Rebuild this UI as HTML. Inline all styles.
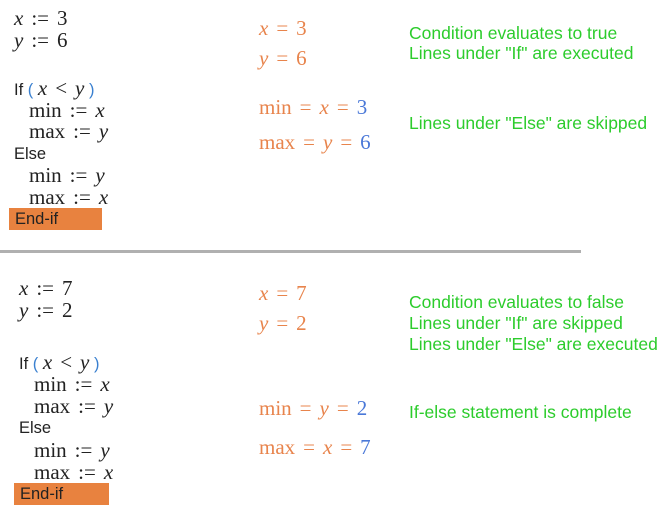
<!DOCTYPE html>
<html><head><meta charset="utf-8"><style>
body{margin:0;width:667px;height:515px;background:#fff;position:relative;overflow:hidden}
.t{position:absolute;line-height:20px;white-space:nowrap}
.m{font-family:"Liberation Serif",serif;font-size:21px;color:#222}
.s{font-family:"Liberation Sans",sans-serif;font-size:16.5px;color:#222}
.g{font-family:"Liberation Sans",sans-serif;font-size:17.5px;color:#2ccc2c}
.o{font-family:"Liberation Serif",serif;font-size:21px;color:#e8844c}
.b{color:#4a78d8}
i{font-style:italic}
.p{color:#3a80d0}
.q{margin:0 8px}
.box{position:absolute;background:#e8823f}
</style></head><body>
<div class="t m" style="left:14px;top:8px"><i>x</i><span class="q">:=</span>3</div>
<div class="t m" style="left:14px;top:30px"><i>y</i><span class="q">:=</span>6</div>
<div class="t s" style="left:14px;top:78px">If <span class="p">(</span> <span class="m"><i>x</i><span class="q">&lt;</span><i>y</i></span> <span class="p">)</span></div>
<div class="t m" style="left:29px;top:100px">min<span class="q">:=</span><i>x</i></div>
<div class="t m" style="left:29px;top:121px">max<span class="q">:=</span><i>y</i></div>
<div class="t s" style="left:14px;top:144px">Else</div>
<div class="t m" style="left:29px;top:165px">min<span class="q">:=</span><i>y</i></div>
<div class="t m" style="left:29px;top:187px">max<span class="q">:=</span><i>x</i></div>
<div class="box" style="left:9px;top:208px;width:93px;height:22px"></div>
<div class="t s" style="left:15px;top:209px">End-if</div>

<div class="t o" style="left:259px;top:18px"><i>x</i><span class="q">=</span>3</div>
<div class="t o" style="left:259px;top:48px"><i>y</i><span class="q">=</span>6</div>
<div class="t o" style="left:259px;top:97px">min<span class="q">=</span><i>x</i><span class="q">=</span><span class="b">3</span></div>
<div class="t o" style="left:259px;top:132px">max<span class="q">=</span><i>y</i><span class="q">=</span><span class="b">6</span></div>

<div class="t g" style="left:409px;top:23px">Condition evaluates to true</div>
<div class="t g" style="left:409px;top:43px">Lines under "If" are executed</div>
<div class="t g" style="left:409px;top:113px">Lines under "Else" are skipped</div>

<div style="position:absolute;left:0;top:250px;width:581px;height:3px;background:#b0b0b0"></div>

<div class="t m" style="left:19px;top:278px"><i>x</i><span class="q">:=</span>7</div>
<div class="t m" style="left:19px;top:300px"><i>y</i><span class="q">:=</span>2</div>
<div class="t s" style="left:19px;top:352px">If <span class="p">(</span> <span class="m"><i>x</i><span class="q">&lt;</span><i>y</i></span> <span class="p">)</span></div>
<div class="t m" style="left:34px;top:374px">min<span class="q">:=</span><i>x</i></div>
<div class="t m" style="left:34px;top:396px">max<span class="q">:=</span><i>y</i></div>
<div class="t s" style="left:19px;top:418px">Else</div>
<div class="t m" style="left:34px;top:440px">min<span class="q">:=</span><i>y</i></div>
<div class="t m" style="left:34px;top:462px">max<span class="q">:=</span><i>x</i></div>
<div class="box" style="left:14px;top:483px;width:95px;height:22px"></div>
<div class="t s" style="left:20px;top:484px">End-if</div>

<div class="t o" style="left:259px;top:283px"><i>x</i><span class="q">=</span>7</div>
<div class="t o" style="left:259px;top:313px"><i>y</i><span class="q">=</span>2</div>
<div class="t o" style="left:259px;top:398px">min<span class="q">=</span><i>y</i><span class="q">=</span><span class="b">2</span></div>
<div class="t o" style="left:259px;top:437px">max<span class="q">=</span><i>x</i><span class="q">=</span><span class="b">7</span></div>

<div class="t g" style="left:409px;top:292px">Condition evaluates to false</div>
<div class="t g" style="left:409px;top:313px">Lines under "If" are skipped</div>
<div class="t g" style="left:409px;top:334px">Lines under "Else" are executed</div>
<div class="t g" style="left:409px;top:402px">If-else statement is complete</div>
</body></html>
